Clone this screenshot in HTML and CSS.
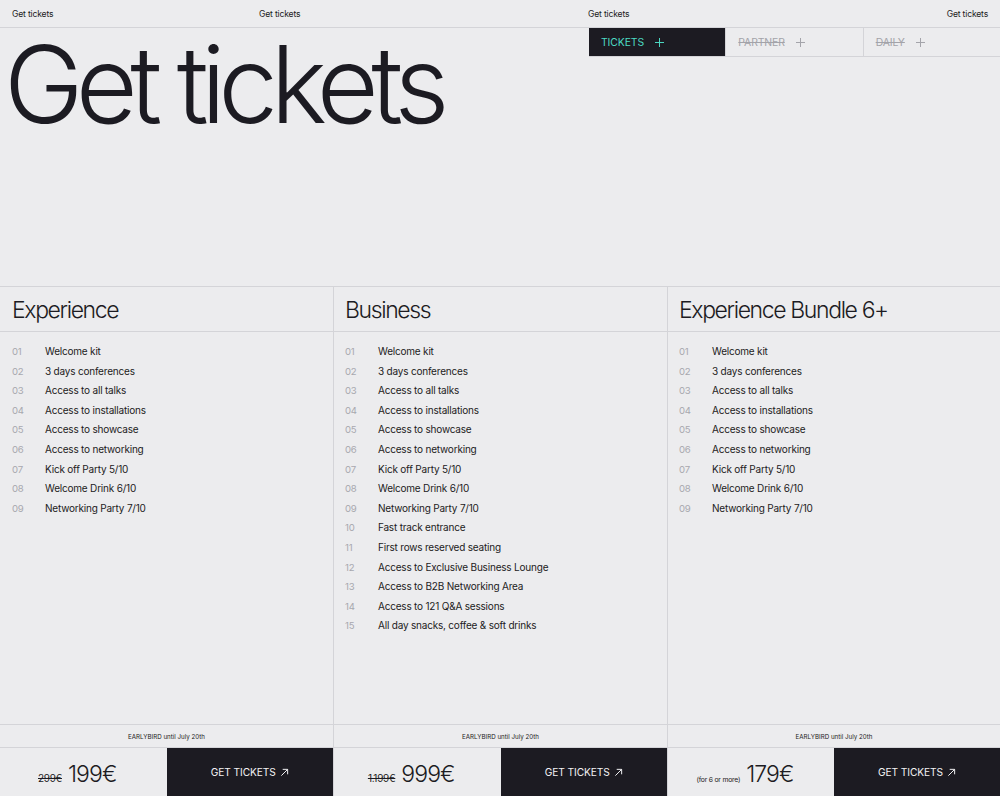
FILE: index.html
```html
<!DOCTYPE html>
<html lang="en">
<head>
<meta charset="utf-8">
<title>Get tickets</title>
<link rel="stylesheet" href="styles.css">
</head>
<body>
<div class="page">
  <header class="topbar">
    <span>Get tickets</span>
    <span>Get tickets</span>
    <span>Get tickets</span>
    <span class="right">Get tickets</span>
  </header>

  <section class="hero">
    <h1 class="title">Get tickets</h1>
    <nav class="tabs">
      <div class="tab active"><span>TICKETS</span><svg class="plus" viewBox="0 0 10 10"><path d="M5 0V10M0 5H10"/></svg></div>
      <div class="tab off"><span>PARTNER</span><svg class="plus" viewBox="0 0 10 10"><path d="M5 0V10M0 5H10"/></svg></div>
      <div class="tab off"><span>DAILY</span><svg class="plus" viewBox="0 0 10 10"><path d="M5 0V10M0 5H10"/></svg></div>
    </nav>
  </section>

  <section class="plans">
    <article class="plan">
      <h2 class="plan-name">Experience</h2>
      <ol class="perks">
        <li><span class="n">01</span>Welcome kit</li>
        <li><span class="n">02</span>3 days conferences</li>
        <li><span class="n">03</span>Access to all talks</li>
        <li><span class="n">04</span>Access to installations</li>
        <li><span class="n">05</span>Access to showcase</li>
        <li><span class="n">06</span>Access to networking</li>
        <li><span class="n">07</span>Kick off Party 5/10</li>
        <li><span class="n">08</span>Welcome Drink 6/10</li>
        <li><span class="n">09</span>Networking Party 7/10</li>
      </ol>
      <div class="early">EARLYBIRD until July 20th</div>
      <div class="buy">
        <div class="price"><s class="old">299€</s><span class="now">199€</span></div>
        <a class="btn" href="#">GET TICKETS <svg class="arrow" viewBox="0 0 10 10"><path d="M1.5 8.5L8.5 1.5M3 1.5H8.5V7"/></svg></a>
      </div>
    </article>

    <article class="plan">
      <h2 class="plan-name">Business</h2>
      <ol class="perks">
        <li><span class="n">01</span>Welcome kit</li>
        <li><span class="n">02</span>3 days conferences</li>
        <li><span class="n">03</span>Access to all talks</li>
        <li><span class="n">04</span>Access to installations</li>
        <li><span class="n">05</span>Access to showcase</li>
        <li><span class="n">06</span>Access to networking</li>
        <li><span class="n">07</span>Kick off Party 5/10</li>
        <li><span class="n">08</span>Welcome Drink 6/10</li>
        <li><span class="n">09</span>Networking Party 7/10</li>
        <li><span class="n">10</span>Fast track entrance</li>
        <li><span class="n">11</span>First rows reserved seating</li>
        <li><span class="n">12</span>Access to Exclusive Business Lounge</li>
        <li><span class="n">13</span>Access to B2B Networking Area</li>
        <li><span class="n">14</span>Access to 121 Q&amp;A sessions</li>
        <li><span class="n">15</span>All day snacks, coffee &amp; soft drinks</li>
      </ol>
      <div class="early">EARLYBIRD until July 20th</div>
      <div class="buy">
        <div class="price"><s class="old">1.199€</s><span class="now">999€</span></div>
        <a class="btn" href="#">GET TICKETS <svg class="arrow" viewBox="0 0 10 10"><path d="M1.5 8.5L8.5 1.5M3 1.5H8.5V7"/></svg></a>
      </div>
    </article>

    <article class="plan">
      <h2 class="plan-name">Experience Bundle 6+</h2>
      <ol class="perks">
        <li><span class="n">01</span>Welcome kit</li>
        <li><span class="n">02</span>3 days conferences</li>
        <li><span class="n">03</span>Access to all talks</li>
        <li><span class="n">04</span>Access to installations</li>
        <li><span class="n">05</span>Access to showcase</li>
        <li><span class="n">06</span>Access to networking</li>
        <li><span class="n">07</span>Kick off Party 5/10</li>
        <li><span class="n">08</span>Welcome Drink 6/10</li>
        <li><span class="n">09</span>Networking Party 7/10</li>
      </ol>
      <div class="early">EARLYBIRD until July 20th</div>
      <div class="buy">
        <div class="price"><span class="note">(for 6 or more)</span><span class="now">179€</span></div>
        <a class="btn" href="#">GET TICKETS <svg class="arrow" viewBox="0 0 10 10"><path d="M1.5 8.5L8.5 1.5M3 1.5H8.5V7"/></svg></a>
      </div>
    </article>
  </section>
</div>
</body>
</html>
```

FILE: styles.css
```css
* { box-sizing: border-box; }
html, body { margin: 0; padding: 0; }
body {
  background: #ececee;
  color: #1c1b22;
  font-family: Inter, "Liberation Sans", Arial, sans-serif;
}
.page {
  height: 796px;
  display: flex;
  flex-direction: column;
  overflow: hidden;
}

.topbar {
  height: 28px;
  border-bottom: 1px solid #d4d4d8;
  display: grid;
  grid-template-columns: 247px 329px 1fr auto;
  align-items: center;
  padding: 0 12px;
  font-size: 8.6px;
  letter-spacing: -0.02em;
}

.hero {
  height: 258px;
  display: flex;
  justify-content: space-between;
  align-items: flex-start;
}
.title {
  margin: 3px 0 0;
  padding-left: 4px;
  font-size: 107px;
  font-weight: 300;
  letter-spacing: -0.072em;
  line-height: 1;
}
.tabs {
  width: 411px;
  display: flex;
  border-bottom: 1px solid #d4d4d8;
}
.tab {
  flex: 1;
  height: 28px;
  display: flex;
  align-items: center;
  gap: 11px;
  padding-left: 12px;
  font-size: 10.4px;
  letter-spacing: -0.01em;
  border-left: 1px solid #d4d4d8;
}
.tab:first-child { border-left: 0; }
.tab.active {
  background: #1c1b22;
  color: #4cd9c2;
}
.tab.off {
  color: #a3a3a9;
  text-decoration: line-through;
}
.plus {
  width: 9px;
  height: 9px;
  fill: none;
  stroke: currentColor;
  stroke-width: 1.1;
}

.plans {
  flex: 1;
  display: grid;
  grid-template-columns: 333px 334px 333px;
  border-top: 1px solid #d4d4d8;
}
.plan {
  display: flex;
  flex-direction: column;
  border-left: 1px solid #d4d4d8;
  --pad: 11px;
}
.plan:first-child {
  border-left: 0;
  --pad: 12px;
}
.plan-name {
  margin: 0;
  height: 45px;
  border-bottom: 1px solid #d4d4d8;
  padding: 9px 12px 0 var(--pad);
  font-size: 23px;
  font-weight: 300;
  letter-spacing: -0.06em;
  line-height: 28px;
}
.perks {
  list-style: none;
  margin: 0;
  padding: 10px 12px 0 var(--pad);
  flex: 1;
}
.perks li {
  height: 19.6px;
  line-height: 19.6px;
  font-size: 10px;
  letter-spacing: -0.02em;
  display: flex;
  align-items: baseline;
}
.n {
  width: 33px;
  font-size: 9.6px;
  color: #a8a8ae;
  flex: none;
}
.early {
  height: 24px;
  border-top: 1px solid #d4d4d8;
  border-bottom: 1px solid #d4d4d8;
  display: flex;
  align-items: center;
  justify-content: center;
  font-size: 6.2px;
}
.buy {
  height: 48px;
  display: grid;
  grid-template-columns: 1fr 1fr;
}
.price {
  display: flex;
  align-items: baseline;
  justify-content: center;
  gap: 6px;
  padding: 12px 12px 0 0;
}
.old {
  font-size: 10px;
  letter-spacing: -0.03em;
}
.note {
  font-size: 6.8px;
  letter-spacing: -0.03em;
}
.now {
  font-size: 23px;
  font-weight: 300;
  letter-spacing: -0.04em;
}
.btn {
  background: #1c1b22;
  color: #f2f2f4;
  text-decoration: none;
  display: flex;
  align-items: center;
  justify-content: center;
  gap: 4px;
  font-size: 10.2px;
  letter-spacing: -0.01em;
}
.arrow {
  width: 9px;
  height: 9px;
  fill: none;
  stroke: currentColor;
  stroke-width: 1.1;
}
```
